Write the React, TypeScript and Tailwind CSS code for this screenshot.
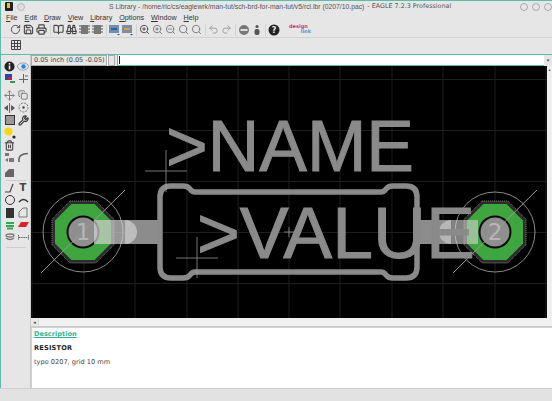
import React from 'react';
import {
  RotateCw,
  Save,
  Printer,
  BookOpen,
  Binoculars,
  ZoomIn,
  ZoomOut,
  Search,
  Undo2,
  Redo2,
  Wrench,
  Trash2,
  Copy,
  Move,
} from 'lucide-react';

const Divider = () => <div className="mx-[1.5px] h-[12px] w-px bg-[#d4d4d4]" />;

const Tool = ({ children }: { children?: React.ReactNode }) => (
  <div className="flex h-[13px] w-[13px] items-center justify-center text-[#484848]">{children}</div>
);

const Side = ({ children }: { children?: React.ReactNode }) => (
  <div className="flex h-[12.5px] w-[13px] items-center justify-center text-[#444]">{children}</div>
);

const Chip = () => (
  <svg width="13" height="13" viewBox="0 0 13 13">
    <rect x="3" y="2" width="7" height="9" fill="#777" />
    <path d="M1 3h2M1 6h2M1 9h2M10 3h2M10 6h2M10 9h2" stroke="#555" />
  </svg>
);

const Badge = ({ bg, fg }: { bg: string; fg: string }) => (
  <svg width="13" height="13" viewBox="0 0 13 13">
    <rect x="1" y="2" width="10" height="8" fill={bg} />
    <rect x="3" y="5" width="6" height="2" fill={fg} />
    <path d="M9 11h3l-1.5 1.5z" fill="#555" />
  </svg>
);

const Pad = ({ x, label }: { x: number; label: string }) => {
  const y = 232;
  const oct = (r: number) => {
    const k = r * 0.414;
    return [
      [x - k, y - r],
      [x + k, y - r],
      [x + r, y - k],
      [x + r, y + k],
      [x + k, y + r],
      [x - k, y + r],
      [x - r, y + k],
      [x - r, y - k],
    ]
      .map((p) => p.join(','))
      .join(' ');
  };
  return (
    <g>
      <circle cx={x} cy={y} r="40" fill="none" stroke="#8a8a8a" strokeWidth="1" />
      <polygon points={oct(31)} fill="#2c2c2c" stroke="#808080" strokeWidth="1" strokeDasharray="1 1" />
      <polygon points={oct(28)} fill="#3fa53f" />
      <circle cx={x} cy={y} r="16.5" fill="#0a0a0a" />
      <circle cx={x} cy={y} r="14.5" fill="#8f8f8f" />
      <line x1={x - 42} y1={y + 41} x2={x + 42} y2={y - 42} stroke="#9a9a9a" strokeWidth="1" />
      <text x={x} y={y + 8} textAnchor="middle" fontSize="23" fill="#b5b5b5" fontFamily="'DejaVu Sans', sans-serif">
        {label}
      </text>
    </g>
  );
};

const Board = () => {
  const vertical = [32, 84, 135, 187, 238, 289, 340, 392, 443, 495, 546];
  const horizontal = [79.5, 130.5, 181.5, 232.5, 283.5];
  return (
    <svg className="h-full w-full" viewBox="31 66 516 252" preserveAspectRatio="none">
      <rect x="31" y="66" width="516" height="252" fill="#000" />
      {vertical.map((x) => (
        <line key={x} x1={x} y1="66" x2={x} y2="318" stroke="#1e1e1e" strokeWidth="1" />
      ))}
      {horizontal.map((y) => (
        <line key={y} x1="31" y1={y} x2="547" y2={y} stroke="#1e1e1e" strokeWidth="1" />
      ))}

      {/* leads */}
      <Pad x={83} label="1" />
      <Pad x={495} label="2" />
      <rect x="125" y="220" width="34" height="24" fill="#8c8c8c" />
      <rect x="417" y="220" width="34" height="24" fill="#8c8c8c" />
      <path d="M94 220h31a12 12 0 0 1 0 24h-31z" fill="#d0d0d0" fillOpacity="0.72" />
      <path d="M478 220h-27a12 12 0 0 0 0 24h27z" fill="#d0d0d0" fillOpacity="0.62" />

      {/* package outline */}
      <path
        d="M160 197q0-11 11-11h12q5 0 7 3q2 3 5 3h186q3 0 5-3q2-3 7-3h13q11 0 11 11v70q0 11-11 11h-13q-5 0-7-3q-2-3-5-3h-186q-3 0-5 3q-2 3-7 3h-12q-11 0-11-11z"
        fill="none"
        stroke="#8a8a8a"
        strokeWidth="5.5"
      />

      <text
        x="166"
        y="171"
        fontSize="73"
        fill="#8a8a8a"
        stroke="#8a8a8a"
        strokeWidth="1"
        textLength="248"
        lengthAdjust="spacingAndGlyphs"
        fontFamily="'Liberation Sans', sans-serif"
      >
        &gt;NAME
      </text>
      <text
        x="197"
        y="258"
        fontSize="73"
        fill="#8a8a8a"
        stroke="#8a8a8a"
        strokeWidth="1"
        textLength="278"
        lengthAdjust="spacingAndGlyphs"
        fontFamily="'Liberation Sans', sans-serif"
      >
        &gt;VALUE
      </text>

      {/* origins */}
      <path d="M145 171h42M166 150v42M176 258h42M197 237v41M284 232h10M289 227v10" stroke="#a8a8a8" strokeWidth="0.7" />
    </svg>
  );
};

export default function App() {
  const menus = ['File', 'Edit', 'Draw', 'View', 'Library', 'Options', 'Window', 'Help'];

  return (
    <div className="flex h-[401px] w-[552px] flex-col overflow-hidden bg-[#e6e6e6] font-['DejaVu_Sans',sans-serif] text-[#333]">
      <div className="flex h-[388px] shrink-0 flex-col border-l border-t border-[#5fbcaa]">
        {/* Title bar */}
        <div className="flex h-[11px] items-center pl-[4px] pr-[0px]">
          <div className="h-[9px] w-[8px] rounded-[1px] bg-[#222]">
            <div className="ml-[2px] mt-[1px] h-[5px] w-[3px] bg-[#e2c21c]" />
          </div>
          <div className="ml-[4px] h-[8px] w-[8px] rounded-full border border-[#bbb] bg-[#ddd]" />
          <div className="ml-[84px] whitespace-nowrap font-['Liberation_Sans',sans-serif] text-[6.8px] leading-[11px] text-[#555]">
            S Library - /home/ric/cs/eaglewrk/man-tut/sch-brd-for-man-tut/v5/rcl.lbr (0207/10.pac)
          </div>
          <div className="ml-[3px] whitespace-nowrap text-[6.4px] leading-[11px] text-[#555]">- EAGLE 7.2.3 Professional</div>
          <div className="ml-auto flex gap-[4px]">
            <div className="h-[8px] w-[8px] rounded-full border border-[#aaa]" />
            <div className="h-[8px] w-[8px] rounded-full border border-[#aaa]" />
            <div className="h-[8px] w-[8px] rounded-full border border-[#aaa]" />
          </div>
        </div>

        {/* Menu */}
        <div className="flex h-[11px] items-center gap-[7px] pl-[5px] font-['Liberation_Sans',sans-serif] text-[7.2px] leading-[11px] text-[#333]">
          {menus.map((m) => (
            <span key={m}>
              <span className="underline">{m[0]}</span>
              {m.slice(1)}
            </span>
          ))}
        </div>

        {/* Main toolbar */}
        <div className="flex h-[15px] items-center border-b border-[#d2d2d2] pb-[1px] pl-[8px]">
          <Tool><RotateCw size={11} strokeWidth={2} /></Tool>
          <Tool><Save size={11} strokeWidth={2.4} /></Tool>
          <Tool><Printer size={11} strokeWidth={2.4} /></Tool>
          <Divider />
          <Tool><BookOpen size={11} strokeWidth={2.4} /></Tool>
          <Tool><Binoculars size={11} strokeWidth={2.4} /></Tool>
          <Tool><Chip /></Tool>
          <Tool><Chip /></Tool>
          <Divider />
          <Tool><Badge bg="#6d8fb5" fg="#3a5f8a" /></Tool>
          <Tool><Badge bg="#7d8fa5" fg="#d9a441" /></Tool>
          <Divider />
          <Tool><ZoomIn size={11} /></Tool>
          <Tool><ZoomIn size={11} className="text-[#777]" /></Tool>
          <Tool><ZoomOut size={11} className="text-[#777]" /></Tool>
          <Tool><Search size={11} className="text-[#777]" /></Tool>
          <Tool><Search size={11} className="text-[#777]" /></Tool>
          <Divider />
          <Tool><Undo2 size={11} className="text-[#999]" /></Tool>
          <Tool><Redo2 size={11} className="text-[#999]" /></Tool>
          <Divider />
          <Tool>
            <svg width="12" height="12" viewBox="0 0 12 12">
              <circle cx="6" cy="6" r="5" fill="#777" />
              <rect x="2.5" y="5" width="7" height="2" fill="#ddd" />
            </svg>
          </Tool>
          <Tool>
            <svg width="12" height="12" viewBox="0 0 12 12">
              <circle cx="6" cy="2.5" r="1.6" fill="#555" />
              <rect x="3.5" y="5" width="5" height="6" rx="2" fill="#555" />
            </svg>
          </Tool>
          <Divider />
          <Tool>
            <svg width="12" height="12" viewBox="0 0 12 12">
              <circle cx="6" cy="6" r="5.5" fill="#222" />
              <text x="6" y="9" textAnchor="middle" fontSize="8" fontWeight="700" fill="#eee">?</text>
            </svg>
          </Tool>
          <div className="ml-[9px] flex h-[11px] w-[22px] flex-col text-[5px] font-bold leading-[5px]">
            <span className="text-[#c2386d]">design</span>
            <span className="self-end text-[#3f9bd1]">link</span>
          </div>
        </div>

        {/* Second toolbar */}
        <div className="flex h-[16px] items-center pb-[2px] pl-[8px]">
          <Tool>
            <svg width="12" height="12" viewBox="0 0 12 12" fill="none" stroke="#444">
              <path d="M1.5 1.5h9v9h-9zM1.5 4.5h9M1.5 7.500h9M4.500 1.500v9M7.500 1.500v9" />
            </svg>
          </Tool>
        </div>

        <div className="h-px shrink-0 bg-[#5fbcaa]" />

        <div className="flex min-h-0 flex-1">
          {/* Left toolbar */}
          <div className="flex w-[30px] shrink-0 flex-col border-r border-[#c9c9c9] pl-[2px] pt-[5px]">
            <div className="grid grid-cols-2">
              <Side>
                <svg width="11" height="11" viewBox="0 0 11 11">
                  <circle cx="5.5" cy="5.5" r="5" fill="#222" />
                  <rect x="4.7" y="4.5" width="1.6" height="4" fill="#eee" />
                  <rect x="4.7" y="2" width="1.6" height="1.6" fill="#eee" />
                </svg>
              </Side>
              <Side>
                <svg width="12" height="9" viewBox="0 0 12 9">
                  <ellipse cx="6" cy="4.5" rx="5.5" ry="3.6" fill="#dfe9f3" stroke="#777" strokeWidth="0.6" />
                  <circle cx="6.5" cy="4.5" r="2.2" fill="#2f86d4" />
                </svg>
              </Side>
              <Side>
                <svg width="12" height="12" viewBox="0 0 12 12">
                  <rect x="1" y="1" width="7" height="6" fill="#2345b5" />
                  <rect x="4" y="4" width="4" height="3" fill="#c2203a" />
                  <rect x="6" y="8" width="5" height="2" fill="#2e9a4a" />
                </svg>
              </Side>
              <Side>
                <svg width="11" height="11" viewBox="0 0 11 11" stroke="#666" fill="none">
                  <path d="M5.5 1v9M1 6.5h9M7 3h3" />
                </svg>
              </Side>
            </div>
            <div className="mt-[4px] grid grid-cols-2">
              <Side><Move size={11} className="text-[#777]" /></Side>
              <Side><Copy size={10} className="text-[#666]" /></Side>
              <Side>
                <svg width="11" height="10" viewBox="0 0 11 10">
                  <path d="M5.5 0v10" stroke="#666" />
                  <path d="M0 5l4-3v6zM11 5l-4-3v6z" fill="#555" />
                </svg>
              </Side>
              <Side>
                <svg width="11" height="11" viewBox="0 0 11 11" fill="none" stroke="#777">
                  <circle cx="5.5" cy="5.5" r="4.5" strokeDasharray="2 1" />
                  <circle cx="5.5" cy="5.5" r="1" fill="#444" />
                </svg>
              </Side>
              <Side><div className="h-[10px] w-[10px] border border-[#333] bg-[#999]" /></Side>
              <Side><Wrench size={11} strokeWidth={2.6} className="text-[#333]" /></Side>
              <Side>
                <svg width="12" height="12" viewBox="0 0 12 12">
                  <circle cx="4.5" cy="4.5" r="4" fill="#f5d90f" />
                  <circle cx="10" cy="10" r="1.6" fill="#222" />
                </svg>
              </Side>
              <Side />
              <Side><Trash2 size={11} strokeWidth={2.4} className="text-[#444]" /></Side>
              <Side />
              <Side>
                <svg width="11" height="11" viewBox="0 0 11 11" fill="#777">
                  <rect x="1" y="1" width="4" height="3" />
                  <rect x="5" y="6" width="5" height="4" />
                  <path d="M1 8l3-2v4z" />
                </svg>
              </Side>
              <Side>
                <svg width="11" height="11" viewBox="0 0 11 11" fill="none" stroke="#666" strokeWidth="1.6">
                  <path d="M1 10V7q0-5 9-5.500" />
                </svg>
              </Side>
            </div>
            <div className="mt-[2px] grid grid-cols-2">
              <Side>
                <svg width="11" height="11" viewBox="0 0 11 11" fill="#666">
                  <path d="M1 10V6l4-4h5v8z" />
                </svg>
              </Side>
              <Side />
            </div>
            <div className="my-px ml-[3px] h-px w-[20px] bg-[#cdcdcd]" />
            <div className="grid grid-cols-2">
              <Side>
                <svg width="11" height="11" viewBox="0 0 11 11" fill="none" stroke="#444" strokeWidth="1.2">
                  <path d="M1 10h5l3-8" />
                </svg>
              </Side>
              <Side><span className="text-[10px] font-bold leading-none text-[#444]">T</span></Side>
              <Side><div className="h-[10px] w-[10px] rounded-full border-[1.5px] border-[#333]" /></Side>
              <Side>
                <svg width="11" height="7" viewBox="0 0 11 7" fill="none" stroke="#333" strokeWidth="1.4">
                  <path d="M1 5q4.500-5 9 0" />
                </svg>
              </Side>
              <Side><div className="h-[10px] w-[8px] bg-[#333]" /></Side>
              <Side>
                <svg width="10" height="11" viewBox="0 0 10 11" fill="none" stroke="#777">
                  <path d="M1 10V5l4-4h4v9z" />
                </svg>
              </Side>
              <Side>
                <svg width="10" height="9" viewBox="0 0 10 9" fill="none" stroke="#33a852" strokeWidth="1.8">
                  <path d="M1 2h8M1 5h8M2 7.500h6" />
                </svg>
              </Side>
              <Side>
                <svg width="11" height="6" viewBox="0 0 11 6" fill="#d8232a">
                  <path d="M3 0h8L8 5H0z" />
                </svg>
              </Side>
              <Side>
                <svg width="10" height="9" viewBox="0 0 10 9" fill="none" stroke="#777" strokeWidth="1.3">
                  <ellipse cx="5" cy="2.500" rx="4" ry="1.500" />
                  <path d="M1 5q4 3 8 0" />
                </svg>
              </Side>
              <Side>
                <svg width="11" height="5" viewBox="0 0 11 5" fill="none" stroke="#666">
                  <path d="M.5 0v5M10.500 0v5M1 2.500h9" strokeDasharray="1.500 .7" />
                </svg>
              </Side>
            </div>
            <div className="ml-[3px] mt-[3px] h-px w-[20px] bg-[#cdcdcd]" />
          </div>

          {/* Right column */}
          <div className="flex min-w-0 flex-1 flex-col">
            {/* Command row */}
            <div className="flex h-[11px] shrink-0 items-stretch bg-white">
              <div className="flex w-[76px] items-center whitespace-nowrap border border-[#aaa] bg-[#e6e6e6] pl-[2px] text-[6.5px] leading-none text-[#444]">
                0.05 inch (0.05 -0.05)
              </div>
              <div className="ml-[1px] w-[7px] border border-[#aaa] bg-[#e6e6e6]" />
              <div className="w-[2px] bg-[#e6e6e6]" />
              <div className="flex-1 border-b border-l border-[#5fbcaa] bg-white pl-[1px]">
                <div className="mt-[1px] h-[8px] w-px bg-[#222]" />
              </div>
              <div className="flex w-[8px] items-center justify-center bg-[#e6e6e6] text-[5px] text-[#444]">▾</div>
            </div>

            {/* Canvas with scrollbars */}
            <div className="flex h-[252px] shrink-0">
              <div className="min-w-0 flex-1"><Board /></div>
              <div className="flex w-[5px] shrink-0 flex-col bg-[#efefef]">
                <div className="h-[8px] text-center text-[4px] leading-[8px] text-[#555]">▴</div>
              </div>
            </div>
            <div className="flex h-[9px] shrink-0 items-center border-b border-[#c9c9c9] bg-[#e9e9e9]">
              <div className="w-[7px] text-center text-[5px] leading-none text-[#444]">◂</div>
              <div className="h-full flex-1 border-l border-[#d5d5d5] bg-[#f0f0f0]" />
            </div>

            {/* Description */}
            <div className="min-h-0 flex-1 border-l border-t border-[#d0d0d0] bg-white pl-[2px] pt-px text-[6.6px] leading-[10px]">
              <div className="font-bold text-[#2fb39c] underline">Description</div>
              <div className="mt-[4px] font-bold tracking-[0.2px] text-[#222]">RESISTOR</div>
              <div className="mt-[4px] text-[#444]">type 0207, grid 10 mm</div>
            </div>
          </div>
        </div>
      </div>
      <div className="flex-1 border-t border-[#cfcfcf] bg-[#e2e2e2]" />
    </div>
  );
}
